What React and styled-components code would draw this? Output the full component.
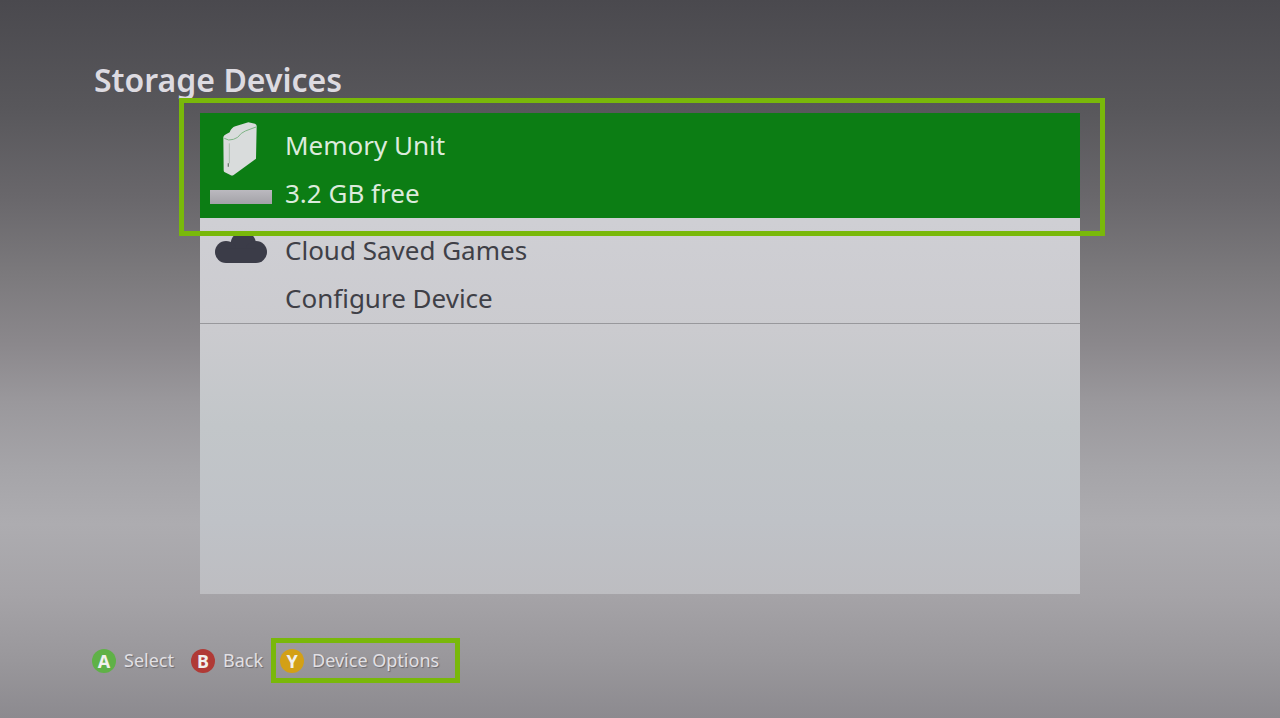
import React from "react";
import styled, { createGlobalStyle } from "styled-components";

const hints = [
  { letter: "A", label: "Select", color: "#5fb147" },
  { letter: "B", label: "Back", color: "#b03a36" },
  { letter: "Y", label: "Device Options", color: "#d3a016", highlighted: true },
];

const MemoryUnitIcon = () => (
  <svg width="38" height="56" viewBox="141 78 114 168" aria-hidden="true">
    <path
      fill="#d9dcdc"
      d="M145 126 Q146 121 153 118 L164 112 Q169 98 181 94 L220 82 L240 86 Q245 88 245 93 L243 191 L176 240 Q171 243 166 240 L148 231 Q146 230 146 226 Z"
    />
    <path
      fill="none"
      stroke="#7fb486"
      strokeWidth="3"
      d="M148 130 L161 135 Q176 135 188 127 Q198 113 211 108 L243 96"
    />
    <path fill="none" stroke="#a9bfac" strokeWidth="3" d="M163 145 V205" />
    <path fill="none" stroke="#6e7a71" strokeWidth="4" d="M160 205 V215" />
  </svg>
);

const CloudIcon = () => (
  <svg width="52" height="33" viewBox="118 405 156 99" aria-hidden="true">
    <g fill="#3b3c48">
      <circle cx="203" cy="447" r="38" />
      <circle cx="151" cy="471" r="33" />
      <circle cx="241" cy="471" r="33" />
      <rect x="151" y="460" width="90" height="44" />
    </g>
  </svg>
);

const App = () => {
  return (
    <>
      <GlobalStyle />
      <Page>
        <Header>
          <h1>Storage Devices</h1>
        </Header>
        <DeviceList>
          <li>
            <DeviceRow type="button" $selected>
              <IconCell>
                <MemoryUnitIcon />
                <CapacityBar />
              </IconCell>
              <RowText>
                <span>Memory Unit</span>
                <span>3.2 GB free</span>
              </RowText>
              <RowCallout />
            </DeviceRow>
          </li>
          <li>
            <DeviceRow type="button">
              <IconCell $top={4}>
                <CloudIcon />
              </IconCell>
              <RowText>
                <span>Cloud Saved Games</span>
                <span>Configure Device</span>
              </RowText>
            </DeviceRow>
          </li>
        </DeviceList>
        <Footer>
          {hints.map((hint) => (
            <HintButton type="button" key={hint.letter}>
              <Badge $color={hint.color}>{hint.letter}</Badge>
              {hint.label}
              {hint.highlighted && <HintCallout />}
            </HintButton>
          ))}
        </Footer>
      </Page>
    </>
  );
};

const GlobalStyle = createGlobalStyle`
  * {
    box-sizing: border-box;
    margin: 0;
    padding: 0;
  }
  body {
    font-family: "Noto Sans", "Open Sans", sans-serif;
  }
  button {
    border: none;
    background: none;
    font: inherit;
    cursor: pointer;
  }
`;

const Page = styled.main`
  min-height: 100vh;
  display: flex;
  flex-direction: column;
  background: linear-gradient(
    #4a494e 0%,
    #58575b 15%,
    #6a686c 28%,
    #7b797c 38%,
    #8b888c 48%,
    #9a989c 56%,
    #a5a4a8 65%,
    #adacb0 73%,
    #a5a3a7 83%,
    #99979b 92%,
    #8c8a8f 100%
  );
`;

const Header = styled.header`
  height: 113px;
  padding: 58px 94px 0;
  h1 {
    font-size: 32px;
    line-height: 44px;
    font-weight: 600;
    color: #dddbe1;
  }
`;

const DeviceList = styled.ul`
  flex: 1;
  margin: 0 200px;
  list-style: none;
  background: linear-gradient(
    #d3d3d9,
    #cbcbcf 45%,
    #c2c6c9 65%,
    #bfc2c7 85%,
    #bdbdc1
  );
`;

const DeviceRow = styled.button`
  position: relative;
  width: 100%;
  display: flex;
  padding: 8px 10px 1px;
  text-align: left;
  color: ${({ $selected }) => ($selected ? "#dcebdc" : "#3f4047")};
  background: ${({ $selected }) => ($selected ? "#0c7d14" : "transparent")};
  border-bottom: ${({ $selected }) => ($selected ? "none" : "1px solid #98989c")};
`;

const IconCell = styled.div`
  width: 62px;
  margin-right: 13px;
  padding-top: ${({ $top = 0 }) => $top}px;
  display: flex;
  flex-direction: column;
  align-items: center;
`;

const CapacityBar = styled.div`
  width: 100%;
  height: 14px;
  margin-top: 13px;
  background: linear-gradient(#bbb9bf, #a3a2a7);
`;

const RowText = styled.div`
  display: flex;
  flex-direction: column;
  font-size: 26px;
  line-height: 48px;
`;

const Callout = styled.div`
  position: absolute;
  z-index: 1;
  border: 5px solid #79b80a;
  pointer-events: none;
`;

const RowCallout = styled(Callout)`
  inset: -15px -25px -18px -21px;
`;

const HintCallout = styled(Callout)`
  inset: -10px -21px -10px -9px;
`;

const Footer = styled.footer`
  height: 124px;
  padding: 54px 92px 0;
  display: flex;
  align-items: flex-start;
  gap: 17px;
`;

const HintButton = styled.button`
  position: relative;
  display: flex;
  align-items: center;
  gap: 8px;
  font-size: 18px;
  line-height: 25px;
  color: #e2e0e4;
  text-shadow: 1px 1px 1px #6a686c;
`;

const Badge = styled.span`
  width: 24px;
  height: 24px;
  border-radius: 50%;
  background: ${({ $color }) => $color};
  color: #f1f0ee;
  font-weight: 700;
  line-height: 24px;
  text-align: center;
  text-shadow: none;
`;

export default App;
